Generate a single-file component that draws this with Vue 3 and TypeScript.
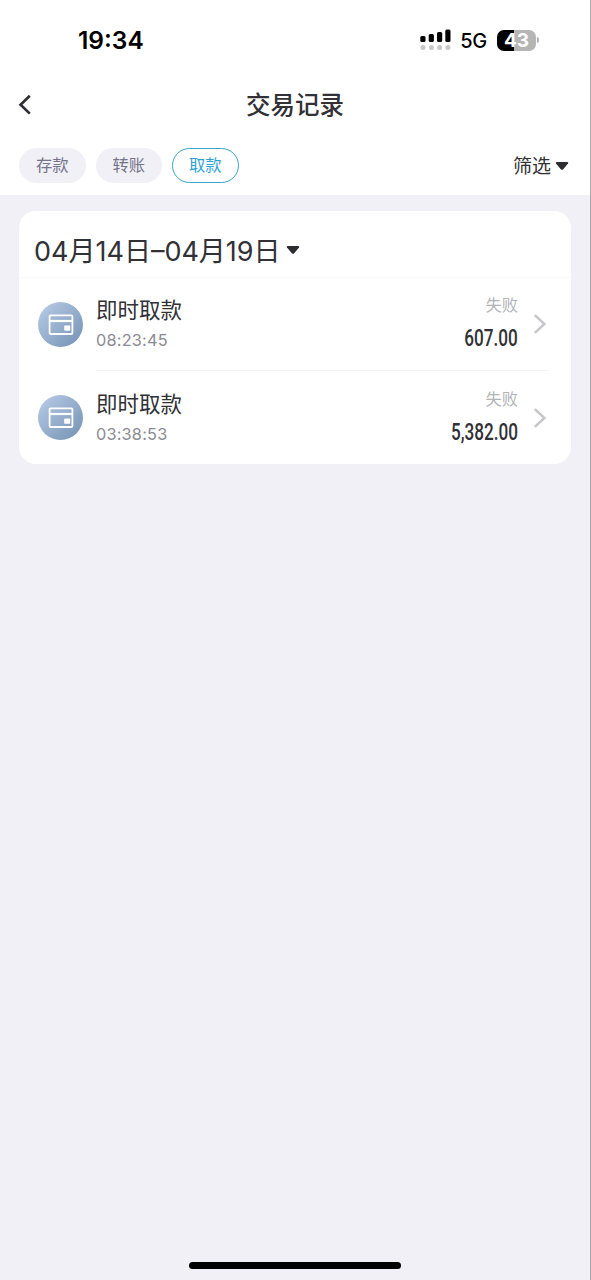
<script setup lang="ts">
interface TradeRecord {
  title: string
  time: string
  status: string
  amount: string
}

const tabs: string[] = ['存款', '转账', '取款']
const activeTab = '取款'

const records: TradeRecord[] = [
  { title: '即时取款', time: '08:23:45', status: '失败', amount: '607.00' },
  { title: '即时取款', time: '03:38:53', status: '失败', amount: '5,382.00' },
]
</script>

<template>
  <div class="screen">
    <header class="top">
      <div class="status-bar">
        <span class="clock">19:34</span>
        <div class="indicators">
          <svg class="signal" width="31" height="22" viewBox="0 0 31 22">
            <g fill="#000">
              <rect x="0.3" y="7" width="5.2" height="6" rx="1.5" />
              <rect x="8.7" y="5" width="5.2" height="8" rx="1.5" />
              <rect x="17" y="3" width="5.2" height="10" rx="1.5" />
              <rect x="25.3" y="0.6" width="5.2" height="12.4" rx="1.5" />
            </g>
            <g fill="#c8c8c8">
              <circle cx="3" cy="18.5" r="2.5" />
              <circle cx="11.5" cy="18.5" r="2.5" />
              <circle cx="19.6" cy="18.5" r="2.5" />
              <circle cx="27.9" cy="18.5" r="2.5" />
            </g>
          </svg>
          <span class="network">5G</span>
          <div class="battery"><span>43</span></div>
          <i class="battery-tip"></i>
        </div>
      </div>

      <nav class="title-bar">
        <svg class="back" width="16" height="22" viewBox="0 0 16 22">
          <path d="M12.8 1.8 L3.6 10.7 L12.8 19.6" fill="none" stroke="#303034" stroke-width="2.7" />
        </svg>
        <h1>交易记录</h1>
      </nav>

      <div class="filter-bar">
        <div class="tabs">
          <span v-for="tab in tabs" :key="tab" class="tab" :class="{ active: tab === activeTab }">{{ tab }}</span>
        </div>
        <div class="filter">
          <span>筛选</span>
          <svg width="14" height="10" viewBox="0 0 14 10">
            <path d="M1.6 1 H12.4 Q13.8 1.2 13 2.5 L8 8.4 Q7 9.3 6 8.4 L1 2.5 Q0.2 1.2 1.6 1 Z" fill="#2c2c31" />
          </svg>
        </div>
      </div>
    </header>

    <main class="card">
      <div class="range">
        <span>04月14日–04月19日</span>
        <svg width="14" height="10" viewBox="0 0 14 10">
          <path d="M1.6 1 H12.4 Q13.8 1.2 13 2.5 L8 8.4 Q7 9.3 6 8.4 L1 2.5 Q0.2 1.2 1.6 1 Z" fill="#2c2c31" />
        </svg>
      </div>

      <div v-for="record in records" :key="record.time" class="row">
        <div class="badge">
          <svg width="26" height="22" viewBox="0 0 26 22">
            <rect x="1.6" y="1.4" width="22.8" height="18.6" rx="1" fill="none" stroke="#fff" stroke-width="1.8" />
            <path d="M1.6 7 H24.4" stroke="#fff" stroke-width="2.2" />
            <rect x="16.2" y="11.6" width="6" height="5.2" rx="0.8" fill="#fff" />
          </svg>
        </div>
        <div class="body">
          <div class="info">
            <span class="name">{{ record.title }}</span>
            <span class="time">{{ record.time }}</span>
          </div>
          <div class="result">
            <span class="state">{{ record.status }}</span>
            <span class="amount">{{ record.amount }}</span>
          </div>
          <svg class="chevron" width="14" height="22" viewBox="0 0 14 22">
            <path d="M1.8 2.2 L11.4 11 L1.8 19.8" fill="none" stroke="#c6c6c8" stroke-width="2.5" />
          </svg>
        </div>
      </div>
    </main>

    <div class="home-indicator"></div>
  </div>
</template>

<style>
body {
  margin: 0;
  background: #f1f0f6;
}
</style>

<style scoped>
.screen {
  display: flex;
  flex-direction: column;
  box-sizing: border-box;
  width: 591px;
  height: 1280px;
  overflow: hidden;
  background: #f1f0f6;
  border-right: 1px solid #a9a9ad;
  font-family: Inter, "Noto Sans CJK SC", sans-serif;
  color: #313136;
}

.top {
  height: 195px;
  background: #fff;
}

.status-bar {
  display: flex;
  align-items: center;
  justify-content: space-between;
  height: 80px;
  padding: 0 51px 0 78px;
  box-sizing: border-box;
  color: #000;
}

.clock {
  font-size: 24.5px;
  font-weight: 600;
}

.indicators {
  display: flex;
  align-items: center;
}

.network {
  margin: 2px 10px 0 9px;
  font-size: 20px;
  font-weight: 500;
  letter-spacing: -0.3px;
}

.battery {
  display: flex;
  align-items: center;
  justify-content: center;
  width: 39px;
  height: 21px;
  border-radius: 7px;
  background: linear-gradient(90deg, #000 43%, #b5b5b5 43%);
  color: #fff;
  font-size: 19px;
  font-weight: 700;
}

.battery-tip {
  width: 2px;
  height: 6px;
  margin-left: 1px;
  border-radius: 0 2px 2px 0;
  background: #b5b5b5;
}

.title-bar {
  display: grid;
  grid-template-columns: 60px 1fr 60px;
  align-items: center;
  height: 50px;
}

.back {
  margin-left: 17px;
}

h1 {
  margin: 0;
  text-align: center;
  font-size: 24.5px;
  line-height: 36px;
  font-weight: 500;
}

.filter-bar {
  display: flex;
  align-items: center;
  justify-content: space-between;
  height: 35px;
  padding: 18px 21px 0 19px;
}

.tabs {
  display: flex;
  gap: 10px;
}

.tab {
  box-sizing: border-box;
  width: 66.5px;
  height: 35px;
  border-radius: 18px;
  background: #f1f0f6;
  color: #74738a;
  font-size: 16.3px;
  line-height: 35px;
  text-align: center;
}

.tab.active {
  border: 1.5px solid #3aa5c9;
  background: #fff;
  color: #2fa3d6;
  line-height: 33px;
}

.filter {
  display: flex;
  align-items: center;
  gap: 4px;
  font-size: 19px;
}

.filter span {
  margin-top: -2px;
}

.card {
  box-sizing: border-box;
  width: 552px;
  height: 253px;
  margin: 16px 0 0 19px;
  border-radius: 17px;
  background: #fff;
}

.range {
  display: flex;
  align-items: center;
  gap: 5px;
  box-sizing: border-box;
  height: 67px;
  padding: 11px 0 0 15px;
  border-bottom: 1px solid #fafafb;
  font-size: 27px;
  font-weight: 400;
  white-space: nowrap;
}

.row {
  display: flex;
  align-items: center;
  height: 93px;
  padding-left: 19px;
}

.badge {
  display: flex;
  align-items: center;
  justify-content: center;
  width: 45px;
  height: 45px;
  border-radius: 50%;
  background: linear-gradient(135deg, #b9cde8, #7391b2);
}

.body {
  display: flex;
  align-items: center;
  box-sizing: border-box;
  width: 452px;
  height: 100%;
  margin-left: 13px;
}

.row:not(:last-child) .body {
  border-bottom: 1.5px solid #f3f3f5;
}

.info,
.result {
  display: flex;
  flex-direction: column;
}

.info {
  flex: 1;
}

.name {
  font-size: 21.5px;
  line-height: 32px;
}

.time {
  font-size: 16.3px;
  line-height: 28px;
  letter-spacing: 0.2px;
  color: #8b8b94;
}

.result {
  align-items: flex-end;
}

.state {
  font-size: 16.3px;
  line-height: 29px;
  color: #b3b4b8;
}

.amount {
  font-family: Roboto, sans-serif;
  font-size: 23px;
  line-height: 37px;
  font-weight: 500;
  transform: scaleX(0.745);
  transform-origin: right;
}

.chevron {
  margin: 0 1px 0 15px;
}

.home-indicator {
  width: 212px;
  height: 7px;
  margin: auto auto 11px 189px;
  border-radius: 4px;
  background: #000;
}
</style>
